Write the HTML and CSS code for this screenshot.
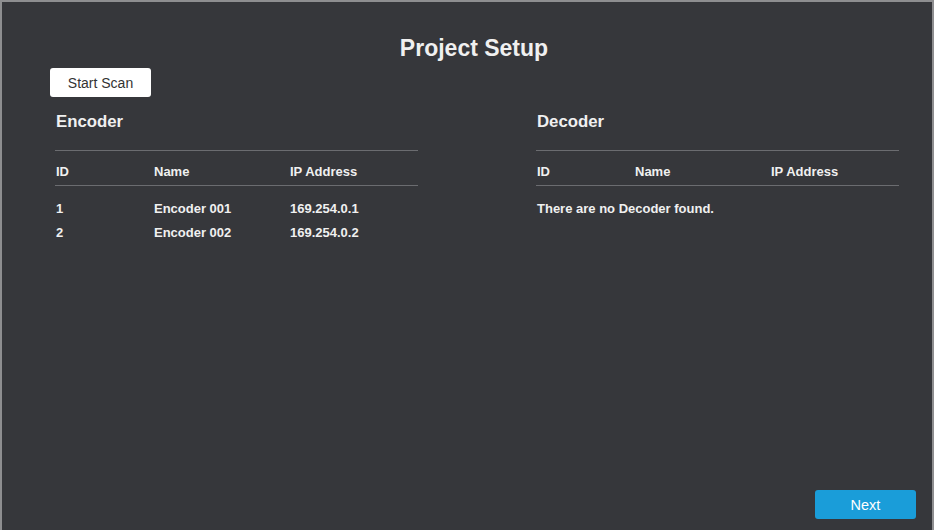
FILE: index.html
```html
<!DOCTYPE html>
<html lang="en">
<head>
<meta charset="utf-8">
<title>Project Setup</title>
<link rel="stylesheet" href="styles.css">
</head>
<body>
<div class="window">
  <h1 class="title">Project Setup</h1>
  <div class="toolbar">
    <button class="btn btn-light">Start Scan</button>
  </div>
  <div class="panels">
    <section class="panel">
      <h2 class="panel-title">Encoder</h2>
      <div class="table">
        <div class="row head">
          <span>ID</span><span>Name</span><span>IP Address</span>
        </div>
        <div class="body">
          <div class="row"><span>1</span><span>Encoder 001</span><span>169.254.0.1</span></div>
          <div class="row"><span>2</span><span>Encoder 002</span><span>169.254.0.2</span></div>
        </div>
      </div>
    </section>
    <section class="panel">
      <h2 class="panel-title">Decoder</h2>
      <div class="table">
        <div class="row head">
          <span>ID</span><span>Name</span><span>IP Address</span>
        </div>
        <div class="body">
          <div class="empty">There are no Decoder found.</div>
        </div>
      </div>
    </section>
  </div>
  <div class="footer">
    <button class="btn btn-primary">Next</button>
  </div>
</div>
</body>
</html>
```

FILE: styles.css
```css
* { box-sizing: border-box; }

html, body {
  margin: 0;
  background: #ffffff;
}

body {
  font-family: "Liberation Sans", Arial, sans-serif;
  color: #f0f0f0;
}

.window {
  width: 934px;
  height: 530px;
  background: #36373b;
  border: 2px solid #8e8e90;
  border-bottom: none;
  display: flex;
  flex-direction: column;
}

.title {
  margin: 0;
  padding-top: 33px;
  padding-left: 14px;
  font-size: 23px;
  line-height: 26px;
  font-weight: bold;
  text-align: center;
  color: #f0f0f0;
}

.toolbar {
  padding-left: 48px;
  margin-top: 7px;
}

.btn {
  width: 101px;
  height: 29px;
  border: none;
  border-radius: 3px;
  font-family: "Liberation Sans", Arial, sans-serif;
  font-size: 14px;
  padding: 0;
  cursor: pointer;
}

.btn-light {
  background: #ffffff;
  color: #333333;
}

.btn-primary {
  background: #1a9dd9;
  color: #ffffff;
  font-size: 14.5px;
}

.panels {
  display: flex;
  gap: 118px;
  padding-left: 53px;
  margin-top: 15px;
}

.panel {
  width: 363px;
}

.panel-title {
  margin: 0 0 0 1px;
  font-size: 16.8px;
  line-height: 20px;
  font-weight: bold;
  color: #f0f0f0;
}

.table {
  margin-top: 18px;
  border-top: 1px solid #6b6c70;
  font-size: 13px;
  font-weight: bold;
}

.row {
  display: grid;
  grid-template-columns: 99px 136px 1fr;
  line-height: 24px;
}

.row span:first-child { padding-left: 1px; }

.head {
  padding-top: 9px;
  padding-bottom: 1px;
  border-bottom: 1px solid #6b6c70;
}

.body {
  padding-top: 11px;
}

.empty {
  line-height: 24px;
  padding-left: 1px;
}

.footer {
  margin-top: auto;
  display: flex;
  justify-content: flex-end;
  padding-right: 16px;
  padding-bottom: 11px;
}
```
